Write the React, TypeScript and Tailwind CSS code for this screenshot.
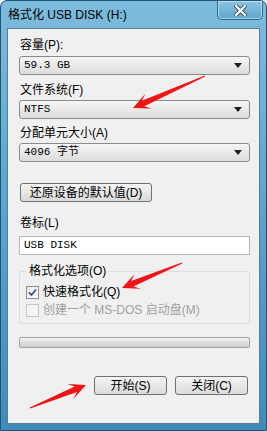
import React from "react"

const cn = '"Liberation Sans", "Noto Sans CJK SC", sans-serif'
const mono = '"Liberation Mono", "Noto Sans CJK SC", monospace'

function arrow(tx: number, ty: number, hx: number, hy: number) {
  const len = Math.hypot(hx - tx, hy - ty)
  const dx = (hx - tx) / len
  const dy = (hy - ty) / len
  const nx = -dy
  const ny = dx
  const b = [hx - dx * 11, hy - dy * 11]
  const w = [hx - dx * 17, hy - dy * 17]
  const pts = [
    [tx + nx * 0.6, ty + ny * 0.6],
    [b[0] + nx * 3, b[1] + ny * 3],
    [w[0] + nx * 8, w[1] + ny * 8],
    [hx, hy],
    [w[0] - nx * 8, w[1] - ny * 8],
    [b[0] - nx * 3, b[1] - ny * 3],
    [tx - nx * 0.6, ty - ny * 0.6],
  ]
  return pts.map((p) => p[0].toFixed(1) + "," + p[1].toFixed(1)).join(" ")
}

function Combo({ value }: { value: string }) {
  return (
    <div className="h-[19px] w-full rounded-[3px] border border-[#8a8a8a] bg-gradient-to-b from-[#f6f6f6] to-[#dcdcdc] flex items-center justify-between pl-[4px] pr-[7px]">
      <span className="text-[11px] leading-none text-black" style={{ fontFamily: mono }}>{value}</span>
      <svg width="8" height="5" viewBox="0 0 8 5">
        <polygon points="0,0 8,0 4,5" fill="#202020" />
      </svg>
    </div>
  )
}

function Btn({ children, w }: { children: React.ReactNode; w: string }) {
  return (
    <div className={`${w} h-[19px] rounded-[3px] border border-[#707070] bg-gradient-to-b from-[#f4f4f4] to-[#dadada] flex items-center justify-center text-[12px] leading-none text-black`}>
      {children}
    </div>
  )
}

export default function App() {
  return (
    <div className="relative w-[267px] h-[431px] overflow-hidden bg-[#edf2f5]" style={{ fontFamily: cn }}>
      <div className="w-full h-full rounded-t-[7px] border border-[#1f5479] bg-gradient-to-b from-[#7dbbdc] via-[#5aa4cc] to-[#3f8cbb] flex flex-col">
        {/* title bar */}
        <div className="h-[27px] flex items-start justify-between shrink-0">
          <span className="mt-[7px] ml-[7px] text-[12px] leading-[14px] text-black">格式化 USB DISK (H:)</span>
          <div className="mr-[3px] w-[46px] h-[19px] rounded-b-[5px] border border-t-0 border-[#2c6a92] bg-gradient-to-b from-[#8dc3e0] to-[#5da6cf] shadow-[inset_0_0_0_1px_rgba(255,255,255,0.45)] flex items-center justify-center">
            <svg width="13" height="11" viewBox="0 0 13 11">
              <path d="M2 1 L11 10 M11 1 L2 10" stroke="#3b4b58" strokeWidth="4" strokeLinecap="square" />
              <path d="M2 1 L11 10 M11 1 L2 10" stroke="#ffffff" strokeWidth="2.2" strokeLinecap="square" />
            </svg>
          </div>
        </div>

        {/* content */}
        <div className="mx-[6px] mb-[6px] flex-1 border border-[#5d7d92] bg-[#f0f0f0] pl-[11px] pr-[9px] flex flex-col">
          <div className="mt-[9px] h-[14px] pl-[1px] text-[12px] leading-[14px]">容量(P):</div>
          <div className="mt-[4px]"><Combo value="59.3 GB" /></div>

          <div className="mt-[8px] h-[14px] pl-[1px] text-[12px] leading-[14px]">文件系统(F)</div>
          <div className="mt-[3px]"><Combo value="NTFS" /></div>

          <div className="mt-[7px] h-[14px] pl-[1px] text-[12px] leading-[14px]">分配单元大小(A)</div>
          <div className="mt-[3px]"><Combo value="4096 字节" /></div>

          <div className="mt-[21px] pl-[1px]">
            <Btn w="w-[132px]">还原设备的默认值(D)</Btn>
          </div>

          <div className="mt-[14px] h-[14px] pl-[1px] text-[12px] leading-[14px]">卷标(L)</div>
          <div className="mt-[6px] h-[19px] w-full border border-[#b5b8bd] bg-white flex items-center pl-[4px] text-[11px] leading-none" style={{ fontFamily: mono }}>
            USB DISK
          </div>

          <fieldset className="mt-[9px] h-[60px] border border-[#d5dfe5] rounded-[3px] pl-[6px] pr-[5px]">
            <legend className="px-[2px] ml-[1px] text-[12px] leading-[14px]">格式化选项(O)</legend>
            <div className="mt-[7px] flex items-center gap-[4px] h-[14px]">
              <div className="w-[13px] h-[13px] border border-[#8f8f8f] bg-gradient-to-br from-[#e6e6e6] to-[#ffffff] flex items-center justify-center">
                <svg width="9" height="9" viewBox="0 0 9 9">
                  <path d="M1 4.5 L3.5 7 L8 1.5" stroke="#3f4f8a" strokeWidth="1.8" fill="none" />
                </svg>
              </div>
              <span className="text-[12px] leading-[14px]">快速格式化(Q)</span>
            </div>
            <div className="mt-[4px] flex items-center gap-[4px] h-[14px]">
              <div className="w-[13px] h-[13px] border border-[#c8c8c8] bg-[#f4f4f4]" />
              <span className="text-[12px] leading-[14px] text-[#a0a0a0]">创建一个 MS-DOS 启动盘(M)</span>
            </div>
          </fieldset>

          <div className="mt-[13px] h-[11px] w-full rounded-[2px] border border-[#a4a4a4] bg-gradient-to-b from-[#f2f2f2] via-[#dfdfdf] to-[#cfcfcf]" />

          <div className="mt-[28px] flex justify-end gap-[8px] pr-[2px]">
            <Btn w="w-[73px]">开始(S)</Btn>
            <Btn w="w-[73px]">关闭(C)</Btn>
          </div>
        </div>
      </div>

      {/* red annotation arrows */}
      <svg className="absolute inset-0 pointer-events-none" width="267" height="431" viewBox="0 0 267 431">
        <polygon points={arrow(205, 76, 133, 108)} fill="#f01414" />
        <polygon points={arrow(182, 263, 122, 288)} fill="#f01414" />
        <polygon points={arrow(30, 408, 86, 385)} fill="#f01414" />
      </svg>
    </div>
  )
}
